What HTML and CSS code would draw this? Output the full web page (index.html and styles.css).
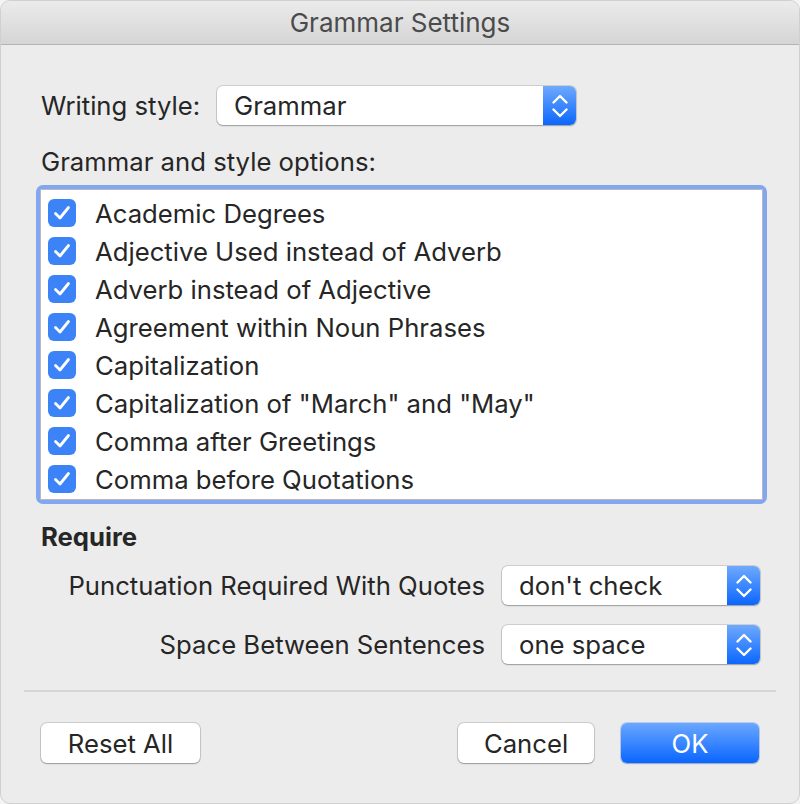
FILE: index.html
```html
<!DOCTYPE html>
<html lang="en">
<head>
    <meta charset="UTF-8">
    <meta name="viewport" content="width=device-width, initial-scale=1.0">
    <title>Grammar Settings</title>
    <link rel="stylesheet" href="styles.css">
</head>
<body>
    <section class="window">
        <header class="titlebar">Grammar Settings</header>

        <section class="content">
            <div class="style-row">
                <span class="label">Writing style:</span>
                <div class="popup popup-wide">
                    <span class="popup-value">Grammar</span>
                    <span class="stepper">
                        <svg width="16" height="26" viewBox="0 0 16 26"><path d="M1.5 9.5 L8 3 L14.5 9.5 M1.5 16.5 L8 23 L14.5 16.5" fill="none" stroke="#fff" stroke-width="2.4" stroke-linecap="round" stroke-linejoin="round"/></svg>
                    </span>
                </div>
            </div>

            <div class="label options-label">Grammar and style options:</div>

            <div class="list">
                <div class="list-inner">
                    <div class="row"><span class="check"><svg width="18" height="16" viewBox="0 0 18 16"><path d="M2.5 8.5 L7 13 L15.5 2.5" fill="none" stroke="#fff" stroke-width="2.8" stroke-linecap="round" stroke-linejoin="round"/></svg></span>Academic Degrees</div>
                    <div class="row"><span class="check"><svg width="18" height="16" viewBox="0 0 18 16"><path d="M2.5 8.5 L7 13 L15.5 2.5" fill="none" stroke="#fff" stroke-width="2.8" stroke-linecap="round" stroke-linejoin="round"/></svg></span>Adjective Used instead of Adverb</div>
                    <div class="row"><span class="check"><svg width="18" height="16" viewBox="0 0 18 16"><path d="M2.5 8.5 L7 13 L15.5 2.5" fill="none" stroke="#fff" stroke-width="2.8" stroke-linecap="round" stroke-linejoin="round"/></svg></span>Adverb instead of Adjective</div>
                    <div class="row"><span class="check"><svg width="18" height="16" viewBox="0 0 18 16"><path d="M2.5 8.5 L7 13 L15.5 2.5" fill="none" stroke="#fff" stroke-width="2.8" stroke-linecap="round" stroke-linejoin="round"/></svg></span>Agreement within Noun Phrases</div>
                    <div class="row"><span class="check"><svg width="18" height="16" viewBox="0 0 18 16"><path d="M2.5 8.5 L7 13 L15.5 2.5" fill="none" stroke="#fff" stroke-width="2.8" stroke-linecap="round" stroke-linejoin="round"/></svg></span>Capitalization</div>
                    <div class="row"><span class="check"><svg width="18" height="16" viewBox="0 0 18 16"><path d="M2.5 8.5 L7 13 L15.5 2.5" fill="none" stroke="#fff" stroke-width="2.8" stroke-linecap="round" stroke-linejoin="round"/></svg></span>Capitalization of "March" and "May"</div>
                    <div class="row"><span class="check"><svg width="18" height="16" viewBox="0 0 18 16"><path d="M2.5 8.5 L7 13 L15.5 2.5" fill="none" stroke="#fff" stroke-width="2.8" stroke-linecap="round" stroke-linejoin="round"/></svg></span>Comma after Greetings</div>
                    <div class="row"><span class="check"><svg width="18" height="16" viewBox="0 0 18 16"><path d="M2.5 8.5 L7 13 L15.5 2.5" fill="none" stroke="#fff" stroke-width="2.8" stroke-linecap="round" stroke-linejoin="round"/></svg></span>Comma before Quotations</div>
                </div>
            </div>

            <div class="require-title">Require</div>

            <div class="require">
                <span class="label require-label">Punctuation Required With Quotes</span>
                <div class="popup popup-small">
                    <span class="popup-value">don't check</span>
                    <span class="stepper">
                        <svg width="16" height="26" viewBox="0 0 16 26"><path d="M1.5 9.5 L8 3 L14.5 9.5 M1.5 16.5 L8 23 L14.5 16.5" fill="none" stroke="#fff" stroke-width="2.4" stroke-linecap="round" stroke-linejoin="round"/></svg>
                    </span>
                </div>

                <span class="label require-label">Space Between Sentences</span>
                <div class="popup popup-small">
                    <span class="popup-value">one space</span>
                    <span class="stepper">
                        <svg width="16" height="26" viewBox="0 0 16 26"><path d="M1.5 9.5 L8 3 L14.5 9.5 M1.5 16.5 L8 23 L14.5 16.5" fill="none" stroke="#fff" stroke-width="2.4" stroke-linecap="round" stroke-linejoin="round"/></svg>
                    </span>
                </div>
            </div>
        </section>

        <hr class="divider">

        <footer class="buttons">
            <button class="btn reset">Reset All</button>
            <span class="spacer"></span>
            <button class="btn cancel">Cancel</button>
            <button class="btn btn-blue ok">OK</button>
        </footer>
    </section>
</body>
</html>
```

FILE: styles.css
```css
*{margin: 0;padding: 0;box-sizing: border-box;}
body{
    width: 800px;
    height: 804px;
    background: #f4f4f4;
    font-family: Inter, "Noto Sans", sans-serif;
    color: #262626;
    overflow: hidden;}

.window{
    width: 800px; height: 804px;
    background-color: #ececec;
    border-radius: 10px;
    border: 1px solid #d0d0d0;
    overflow: hidden;
    display: flex; flex-direction: column;}

.titlebar{
    height: 44px; flex: none;
    display: flex; justify-content: center; align-items: center;
    font-size: 26px; color: #4b4b4b;
    background: linear-gradient(#ebebeb, #d5d5d5);
    border-bottom: 1px solid #b3b3b3;}

.content{padding: 0 40px 0 40px;}

.label{font-size: 25.7px; color: #262626;}

.style-row{
    margin-top: 41px;
    display: flex; align-items: center;}
.style-row .label{width: 176px;}

/* popup buttons */
.popup{
    height: 39px;
    display: flex; align-items: stretch;
    background: #fff;
    border-radius: 6px;
    box-shadow: 0 0 0 1px rgba(0,0,0,0.12), 0 1px 1.5px rgba(0,0,0,0.25);}
.popup-wide{width: 359px;}
.popup-small{width: 258px;}
.popup-value{
    flex: 1;
    display: flex; align-items: center;
    padding-left: 17px;
    font-size: 25.7px; color: #262626;}
.stepper{
    width: 33px; flex: none;
    display: flex; justify-content: center; align-items: center;
    border-radius: 0 6px 6px 0;
    background: linear-gradient(#6ea9fd, #0c67fe);}

.options-label{margin-top: 21px; height: 32px; line-height: 32px;}

/* checkbox list */
.list{
    margin: 7px 0 0 -5px;
    width: 731px;
    border: 4px solid #80a7ef;
    border-radius: 7px;}
.list-inner{
    height: 311px;
    padding-top: 4px;
    background: #fff;
    border: 1px solid #b9b9b9;}
.row{
    height: 38px;
    display: flex; align-items: center;
    font-size: 25.7px; color: #262626;}
.check{
    width: 28px; height: 28px;
    margin: 0 19px 0 7px;
    border-radius: 6px;
    background: #3b83f7;
    display: flex; justify-content: center; align-items: center;}

.require-title{
    margin-top: 17px;
    font-size: 25.7px; font-weight: 700; color: #262626;}

.require{
    margin-top: 14px;
    display: grid;
    grid-template-columns: 444px 258px;
    column-gap: 17px;
    row-gap: 20px;
    align-items: center;}
.require-label{text-align: right;}

.divider{
    margin: 26px 23px 0 23px;
    border: none; height: 2px;
    background-color: #d6d6d6;}

.buttons{
    margin-top: 31px;
    padding: 0 40px;
    display: flex; align-items: center;}
.spacer{flex: 1;}
.btn{
    height: 40px;
    font-family: Inter, "Noto Sans", sans-serif;
    font-size: 25.7px; color: #262626;
    background: #fff;
    border: none;
    border-radius: 6px;
    box-shadow: 0 0 0 1px rgba(0,0,0,0.13), 0 1px 1.5px rgba(0,0,0,0.25);}
.reset{width: 159px;}
.cancel{width: 136px; margin-right: 27px;}
.ok{width: 138px;}
.btn-blue{
    color: #fff;
    background: linear-gradient(#6aa7ff, #0a66ff);
    box-shadow: 0 0 0 1px rgba(0,80,220,0.2), 0 1px 1.5px rgba(0,0,0,0.2);}
```
